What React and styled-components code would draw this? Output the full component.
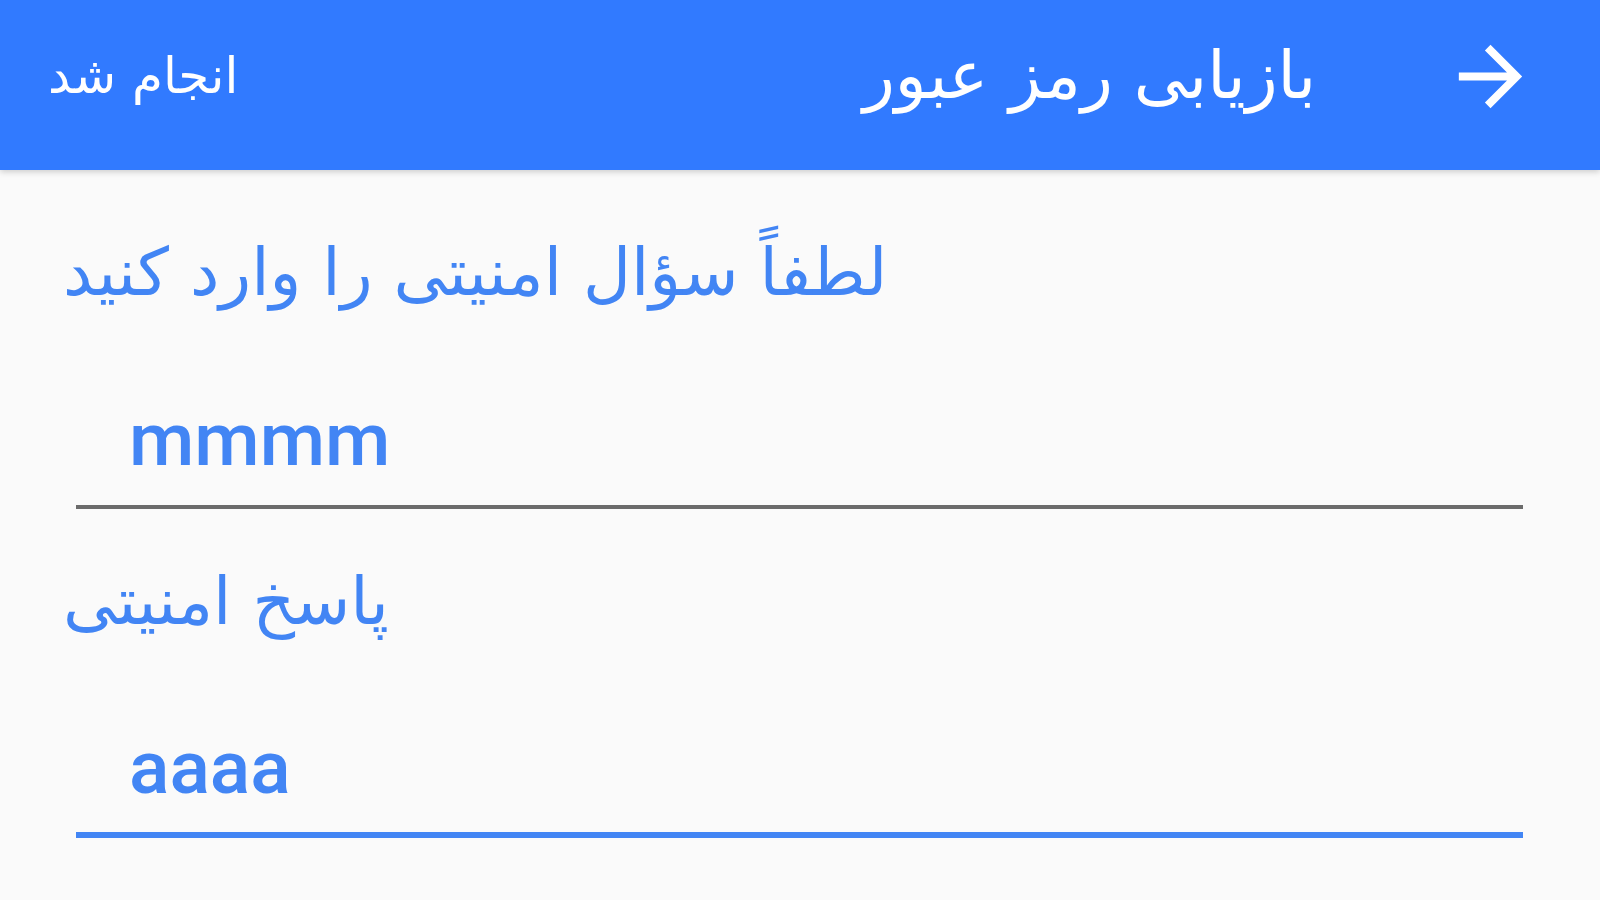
import React from 'react';
import styled, { createGlobalStyle } from 'styled-components';

const GlobalStyle = createGlobalStyle`
  html, body {
    margin: 0;
    padding: 0;
    background: #fafafa;
  }
  * {
    box-sizing: border-box;
  }
`;

const Page = styled.div`
  width: 1600px;
  height: 900px;
  background: #fafafa;
  overflow: hidden;
`;

const Toolbar = styled.header`
  height: 170px;
  background-color: #317aff;
  box-shadow: 0 2px 6px rgba(0, 0, 0, 0.18);
  display: flex;
  align-items: center;
  padding: 0 62px 18px 48px;
  position: relative;
  z-index: 1;
`;

const ActionButton = styled.button`
  background: none;
  border: none;
  padding: 0;
  color: #ffffff;
  font-family: 'DejaVu Sans', sans-serif;
  font-size: 50px;
  line-height: 1;
  cursor: pointer;
`;

const Title = styled.h1`
  margin: 0 127px 0 auto;
  color: #ffffff;
  font-family: 'DejaVu Sans', sans-serif;
  font-weight: normal;
  font-size: 66px;
  line-height: 1;
`;

const NavButton = styled.button`
  width: 95px;
  height: 95px;
  background: none;
  border: none;
  padding: 0;
  display: flex;
  align-items: center;
  justify-content: center;
  cursor: pointer;
`;

const Form = styled.main`
  padding: 58px 77px 0 63px;
  display: flex;
  flex-direction: column;
`;

const Field = styled.div`
  display: flex;
  flex-direction: column;
  margin-bottom: ${({ last }) => (last ? '0' : '48px')};
`;

const Label = styled.label`
  color: #4285f4;
  font-family: 'DejaVu Sans', sans-serif;
  font-size: 66px;
  line-height: 90px;
`;

const Input = styled.input`
  margin: 77px 0 0 13px;
  height: 114px;
  padding: 0 0 22px 53px;
  border: none;
  border-bottom: ${({ focused }) =>
    focused ? '6px solid #4285f4' : '4px solid #6b6b6b'};
  background: transparent;
  color: #4285f4;
  font-family: Roboto, sans-serif;
  font-weight: 500;
  font-size: 75px;
  outline: none;
`;

const ArrowIcon = () => (
  <svg width="95" height="95" viewBox="0 0 24 24" fill="#ffffff">
    <path d="M12 4l-1.41 1.41L16.17 11H4v2h12.17l-5.58 5.59L12 20l8-8z" />
  </svg>
);

export default function App() {
  return (
    <Page>
      <GlobalStyle />
      <Toolbar>
        <ActionButton>انجام شد</ActionButton>
        <Title>بازیابی رمز عبور</Title>
        <NavButton aria-label="back">
          <ArrowIcon />
        </NavButton>
      </Toolbar>
      <Form>
        <Field>
          <Label>لطفاً سؤال امنیتی را وارد کنید</Label>
          <Input readOnly value="mmmm" />
        </Field>
        <Field last>
          <Label>پاسخ امنیتی</Label>
          <Input readOnly focused value="aaaa" />
        </Field>
      </Form>
    </Page>
  );
}
